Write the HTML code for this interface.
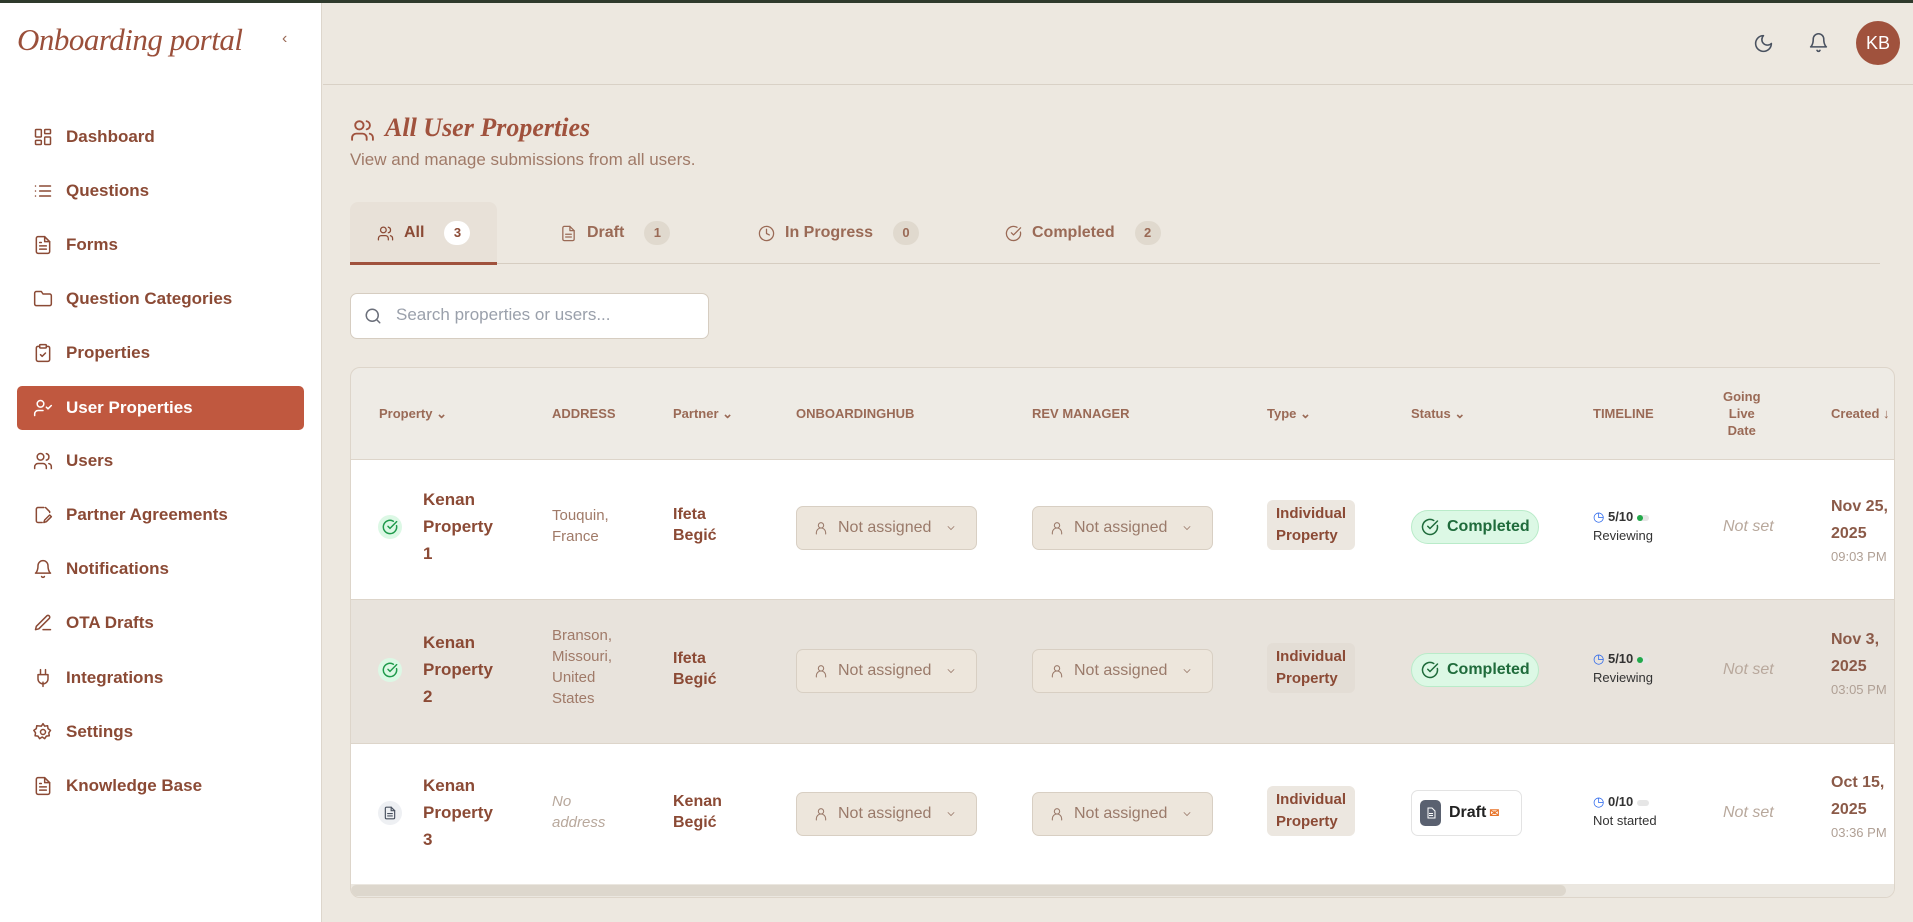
<!DOCTYPE html>
<html><head><meta charset="utf-8"><style>
*{margin:0;padding:0;box-sizing:border-box}
body{width:1913px;height:922px;overflow:hidden;background:#ede8e0;font-family:"Liberation Sans",sans-serif;position:relative;color:#8b4a35}
.abs{position:absolute}
.topbar{left:0;top:0;width:1913px;height:3px;background:#2f3a2c}
.side{left:0;top:3px;width:322px;height:919px;background:#fff;border-right:1px solid #ddd6cc}
.logo{left:17px;top:22px;font-family:"Liberation Serif",serif;font-style:italic;font-size:31px;color:#9a4f3a;letter-spacing:-0.5px}
.nav{left:17px;width:287px;height:44px;display:flex;align-items:center;padding-left:16px;font-size:17px;font-weight:bold;color:#8b4a35;border-radius:5px}
.nav svg{width:20px;height:20px;margin-right:13px;fill:none;stroke:#8b4a35;stroke-width:1.8;stroke-linecap:round;stroke-linejoin:round}
.nav.act{background:#c0583f;color:#fff}
.nav.act svg{stroke:#fff}
.hdr{left:323px;top:3px;right:0;height:82px;border-bottom:1px solid #d9d1c6}
.ic{fill:none;stroke:#4a5260;stroke-width:1.8;stroke-linecap:round;stroke-linejoin:round}
.tab{top:202px;height:62px;display:flex;align-items:center;font-size:16px;color:#9a6a56;font-weight:bold}
.tab svg{width:17px;height:17px;margin-right:10px;fill:none;stroke:#9a6a56;stroke-width:1.8;stroke-linecap:round;stroke-linejoin:round}
.bdg{display:inline-block;width:26px;height:24px;border-radius:12px;background:#e0d9ce;font-size:13px;text-align:center;line-height:24px;margin-left:20px;color:#9a6a56}
.th{top:400px;font-size:13px;font-weight:bold;color:#9a6a56}
.card{left:350px;top:367px;width:1545px;height:531px;border:1px solid #ddd5ca;border-radius:10px;background:#eeebe5;overflow:hidden}
.row{left:0;width:1545px;border-top:1px solid #ddd5ca}
.cell{position:absolute;font-size:16px}
.name{font-weight:bold;font-size:17px;line-height:27px;color:#8b4a35}
.addr{color:#a07a68;line-height:21px;font-size:15px}
.dd{position:absolute;width:181px;height:44px;background:#ede6dc;border:1px solid #d8cfc3;border-radius:7px;display:flex;align-items:center;padding-left:16px;font-size:16px;color:#9a7a6a}
.dd svg{fill:none;stroke:#9a7a6a;stroke-width:1.6;stroke-linecap:round}
.type{position:absolute;background:#ece7e0;border-radius:6px;padding:3px 9px;font-size:15px;line-height:22px;color:#8b4a35;font-weight:bold}
.comp{position:absolute;width:128px;height:34px;border-radius:17px;background:#dcf8e5;border:1px solid #b9ebc9;display:flex;align-items:center;padding-left:9px;font-size:16px;font-weight:bold;color:#1f6b3b}
.tl{position:absolute;font-size:13px;color:#333}
.ns{position:absolute;font-style:italic;color:#b8a89c;font-size:16px}
.dt{position:absolute;font-size:16px;font-weight:bold;color:#8b5a48;line-height:27px}
.dt small{display:block;font-weight:normal;color:#b0a095;font-size:13px;line-height:20px}
.sic{position:absolute;width:24px;height:24px;border-radius:12px;display:flex;align-items:center;justify-content:center}
</style></head><body>
<div class="abs topbar"></div>
<div class="abs side"></div>
<div class="abs logo">Onboarding portal</div>
<div class="abs" style="left:282px;top:30px;font-size:16px;color:#9a6a56">‹</div>

<div class="abs nav" style="top:115px"><svg viewBox="0 0 24 24"><rect x="3" y="3" width="7" height="9" rx="1"/><rect x="14" y="3" width="7" height="5" rx="1"/><rect x="14" y="12" width="7" height="9" rx="1"/><rect x="3" y="16" width="7" height="5" rx="1"/></svg>Dashboard</div>
<div class="abs nav" style="top:169px"><svg viewBox="0 0 24 24"><path d="M8 6h13M8 12h13M8 18h13M3 6h.01M3 12h.01M3 18h.01"/></svg>Questions</div>
<div class="abs nav" style="top:223px"><svg viewBox="0 0 24 24"><path d="M14 2H6a2 2 0 0 0-2 2v16a2 2 0 0 0 2 2h12a2 2 0 0 0 2-2V8z"/><path d="M14 2v6h6M8 13h8M8 17h8M8 9h2"/></svg>Forms</div>
<div class="abs nav" style="top:277px"><svg viewBox="0 0 24 24"><path d="M20 20a2 2 0 0 0 2-2V8a2 2 0 0 0-2-2h-8l-2-3H4a2 2 0 0 0-2 2v13a2 2 0 0 0 2 2z"/></svg>Question Categories</div>
<div class="abs nav" style="top:331px"><svg viewBox="0 0 24 24"><rect x="8" y="2" width="8" height="4" rx="1"/><path d="M16 4h2a2 2 0 0 1 2 2v14a2 2 0 0 1-2 2H6a2 2 0 0 1-2-2V6a2 2 0 0 1 2-2h2M9 14l2 2 4-4"/></svg>Properties</div>
<div class="abs nav act" style="top:386px"><svg viewBox="0 0 24 24"><circle cx="9" cy="7" r="4"/><path d="M2 21v-2a4 4 0 0 1 4-4h6M16 11l2 2 4-4"/></svg>User Properties</div>
<div class="abs nav" style="top:439px"><svg viewBox="0 0 24 24"><circle cx="9" cy="7" r="4"/><path d="M16 21v-2a4 4 0 0 0-4-4H6a4 4 0 0 0-4 4v2M16 3.1a4 4 0 0 1 0 7.8M22 21v-2a4 4 0 0 0-3-3.9"/></svg>Users</div>
<div class="abs nav" style="top:493px"><svg viewBox="0 0 24 24"><path d="M13 3H6a2 2 0 0 0-2 2v14a2 2 0 0 0 2 2h5M20 9V8l-5-5M13 21l1-3 6-6 2 2-6 6z"/></svg>Partner Agreements</div>
<div class="abs nav" style="top:547px"><svg viewBox="0 0 24 24"><path d="M6 8a6 6 0 0 1 12 0c0 7 3 9 3 9H3s3-2 3-9M10.3 21a1.9 1.9 0 0 0 3.4 0"/></svg>Notifications</div>
<div class="abs nav" style="top:601px"><svg viewBox="0 0 24 24"><path d="M12 20h9M16.5 3.5a2.1 2.1 0 0 1 3 3L7 19l-4 1 1-4z"/></svg>OTA Drafts</div>
<div class="abs nav" style="top:656px"><svg viewBox="0 0 24 24"><path d="M12 22v-5M9 8V2M15 8V2M18 8v5a6 6 0 0 1-12 0V8z"/></svg>Integrations</div>
<div class="abs nav" style="top:710px"><svg viewBox="0 0 24 24"><circle cx="12" cy="12" r="3"/><path d="M12 2l2 3 3.5-.5.5 3.5 3 2-2 3 .5 3.5-3.5.5-2 3-3-2-3 2-2-3-3.5-.5.5-3.5-2-3 3-2 .5-3.5L10 5z"/></svg>Settings</div>
<div class="abs nav" style="top:764px"><svg viewBox="0 0 24 24"><path d="M14 2H6a2 2 0 0 0-2 2v16a2 2 0 0 0 2 2h12a2 2 0 0 0 2-2V8z"/><path d="M14 2v6h6M8 13h8M8 17h8M8 9h2"/></svg>Knowledge Base</div>

<div class="abs hdr"></div>
<svg class="abs ic" style="left:1753px;top:33px" width="21" height="21" viewBox="0 0 24 24"><path d="M12 3a6 6 0 0 0 9 9 9 9 0 1 1-9-9z"/></svg>
<svg class="abs ic" style="left:1808px;top:32px" width="21" height="21" viewBox="0 0 24 24"><path d="M6 8a6 6 0 0 1 12 0c0 7 3 9 3 9H3s3-2 3-9M10.3 21a1.9 1.9 0 0 0 3.4 0"/></svg>
<div class="abs" style="left:1856px;top:21px;width:44px;height:44px;border-radius:22px;background:#a0523d;color:#fff;font-size:18px;text-align:center;line-height:44px">KB</div>

<svg class="abs" style="left:350px;top:118px" width="25" height="25" viewBox="0 0 24 24" fill="none" stroke="#a0523d" stroke-width="1.8" stroke-linecap="round"><circle cx="9" cy="7" r="4"/><path d="M16 21v-2a4 4 0 0 0-4-4H6a4 4 0 0 0-4 4v2M16 3.1a4 4 0 0 1 0 7.8M22 21v-2a4 4 0 0 0-3-3.9"/></svg>
<div class="abs" style="left:385px;top:113px;font-family:'Liberation Serif',serif;font-style:italic;font-weight:bold;font-size:26px;color:#a0523d">All User Properties</div>
<div class="abs" style="left:350px;top:150px;font-size:17px;color:#a07a68">View and manage submissions from all users.</div>

<div class="abs" style="left:350px;top:202px;width:147px;height:62px;background:#e8e1d8;border-radius:8px 8px 0 0"></div>
<div class="abs" style="left:350px;top:263px;width:1530px;height:1px;background:#d6cdc1"></div>
<div class="abs" style="left:350px;top:262px;width:147px;height:3px;background:#a0523d"></div>
<div class="abs tab" style="left:377px;color:#8b4a35"><svg viewBox="0 0 24 24" style="stroke:#8b4a35"><circle cx="9" cy="7" r="4"/><path d="M16 21v-2a4 4 0 0 0-4-4H6a4 4 0 0 0-4 4v2M16 3.1a4 4 0 0 1 0 7.8M22 21v-2a4 4 0 0 0-3-3.9"/></svg>All<span class="bdg" style="background:#fff;color:#8b4a35">3</span></div>
<div class="abs tab" style="left:560px"><svg viewBox="0 0 24 24"><path d="M14 2H6a2 2 0 0 0-2 2v16a2 2 0 0 0 2 2h12a2 2 0 0 0 2-2V8z"/><path d="M14 2v6h6M8 13h8M8 17h8"/></svg>Draft<span class="bdg">1</span></div>
<div class="abs tab" style="left:758px"><svg viewBox="0 0 24 24"><circle cx="12" cy="12" r="10"/><path d="M12 6v6l4 2"/></svg>In Progress<span class="bdg">0</span></div>
<div class="abs tab" style="left:1005px"><svg viewBox="0 0 24 24"><path d="M21.8 10A10 10 0 1 1 17 3.3"/><path d="M9 11l3 3L22 4"/></svg>Completed<span class="bdg">2</span></div>

<div class="abs" style="left:350px;top:293px;width:359px;height:46px;background:#fff;border:1px solid #d6cdc1;border-radius:7px"></div>
<svg class="abs" style="left:364px;top:307px" width="18" height="18" viewBox="0 0 24 24" fill="none" stroke="#6b6f7a" stroke-width="2" stroke-linecap="round"><circle cx="11" cy="11" r="8"/><path d="M21 21l-4.3-4.3"/></svg>
<div class="abs" style="left:396px;top:305px;font-size:17px;color:#9aa0ab">Search properties or users...</div>

<div class="abs card">
 <div class="abs th" style="left:28px;top:38px">Property ⌄</div>
 <div class="abs th" style="left:201px;top:38px">ADDRESS</div>
 <div class="abs th" style="left:322px;top:38px">Partner ⌄</div>
 <div class="abs th" style="left:445px;top:38px">ONBOARDINGHUB</div>
 <div class="abs th" style="left:681px;top:38px">REV MANAGER</div>
 <div class="abs th" style="left:916px;top:38px">Type ⌄</div>
 <div class="abs th" style="left:1060px;top:38px">Status ⌄</div>
 <div class="abs th" style="left:1242px;top:38px">TIMELINE</div>
 <div class="abs th" style="left:1372px;top:20px;text-align:center;line-height:17px">Going<br>Live<br>Date</div>
 <div class="abs th" style="left:1480px;top:38px">Created ↓</div>

 <div class="abs row" style="top:91px;height:140px;background:#fff"></div>
 <div class="abs row" style="top:231px;height:144px;background:#e8e3dc"></div>
 <div class="abs row" style="top:375px;height:141px;background:#fff"></div>
 <div class="abs" style="left:0;top:516px;width:1545px;height:15px;background:#ebe7e0"></div>
 <div class="abs" style="left:0;top:517px;width:1215px;height:11px;background:#ddd7cd;border-radius:6px"></div>

 <div class="sic" style="left:27px;top:147px;background:#dcf8e5"><svg width="16" height="16" viewBox="0 0 24 24" fill="none" stroke="#1e9a4b" stroke-width="2.2" stroke-linecap="round"><path d="M21.8 10A10 10 0 1 1 17 3.3"/><path d="M9 11l3 3L22 4"/></svg></div>
 <div class="cell name" style="left:72px;top:118px">Kenan<br>Property<br>1</div>
 <div class="cell addr" style="left:201px;top:137px">Touquin,<br>France</div>
 <div class="cell name" style="left:322px;top:136px;line-height:21px;font-size:16px">Ifeta<br>Begić</div>
 <div class="dd" style="left:445px;top:138px"><svg width="16" height="16" viewBox="0 0 24 24"><circle cx="12" cy="8" r="4"/><path d="M5 21v-2a5 5 0 0 1 14 0v2"/></svg><span style="margin:0 14px 0 9px">Not assigned</span><svg width="12" height="12" viewBox="0 0 24 24"><path d="M6 9l6 6 6-6"/></svg></div>
 <div class="dd" style="left:681px;top:138px"><svg width="16" height="16" viewBox="0 0 24 24"><circle cx="12" cy="8" r="4"/><path d="M5 21v-2a5 5 0 0 1 14 0v2"/></svg><span style="margin:0 14px 0 9px">Not assigned</span><svg width="12" height="12" viewBox="0 0 24 24"><path d="M6 9l6 6 6-6"/></svg></div>
 <div class="type" style="left:916px;top:132px">Individual<br>Property</div>
 <div class="comp" style="left:1060px;top:142px"><svg width="18" height="18" viewBox="0 0 24 24" fill="none" stroke="#1f6b3b" stroke-width="2" stroke-linecap="round"><path d="M21.8 10A10 10 0 1 1 17 3.3"/><path d="M9 11l3 3L22 4"/></svg><span style="margin-left:8px">Completed</span></div>
 <div class="tl" style="left:1242px;top:141px"><span style="color:#2563eb">◷</span> <b>5/10</b> <span style="display:inline-block;width:12px;height:6px;border-radius:3px;background:#e6e6e6;vertical-align:middle;position:relative"><span style="position:absolute;left:0;width:6px;height:6px;border-radius:3px;background:#22a94a"></span></span><br><span style="line-height:22px">Reviewing</span></div>
 <div class="ns" style="left:1372px;top:150px">Not set</div>
 <div class="dt" style="left:1480px;top:125px">Nov 25,<br>2025<small>09:03 PM</small></div>

 <div class="sic" style="left:27px;top:290px;background:#dcf8e5"><svg width="16" height="16" viewBox="0 0 24 24" fill="none" stroke="#1e9a4b" stroke-width="2.2" stroke-linecap="round"><path d="M21.8 10A10 10 0 1 1 17 3.3"/><path d="M9 11l3 3L22 4"/></svg></div>
 <div class="cell name" style="left:72px;top:261px">Kenan<br>Property<br>2</div>
 <div class="cell addr" style="left:201px;top:257px">Branson,<br>Missouri,<br>United<br>States</div>
 <div class="cell name" style="left:322px;top:280px;line-height:21px;font-size:16px">Ifeta<br>Begić</div>
 <div class="dd" style="left:445px;top:281px"><svg width="16" height="16" viewBox="0 0 24 24"><circle cx="12" cy="8" r="4"/><path d="M5 21v-2a5 5 0 0 1 14 0v2"/></svg><span style="margin:0 14px 0 9px">Not assigned</span><svg width="12" height="12" viewBox="0 0 24 24"><path d="M6 9l6 6 6-6"/></svg></div>
 <div class="dd" style="left:681px;top:281px"><svg width="16" height="16" viewBox="0 0 24 24"><circle cx="12" cy="8" r="4"/><path d="M5 21v-2a5 5 0 0 1 14 0v2"/></svg><span style="margin:0 14px 0 9px">Not assigned</span><svg width="12" height="12" viewBox="0 0 24 24"><path d="M6 9l6 6 6-6"/></svg></div>
 <div class="type" style="left:916px;top:275px;background:#e3ddd5">Individual<br>Property</div>
 <div class="comp" style="left:1060px;top:285px"><svg width="18" height="18" viewBox="0 0 24 24" fill="none" stroke="#1f6b3b" stroke-width="2" stroke-linecap="round"><path d="M21.8 10A10 10 0 1 1 17 3.3"/><path d="M9 11l3 3L22 4"/></svg><span style="margin-left:8px">Completed</span></div>
 <div class="tl" style="left:1242px;top:283px"><span style="color:#2563eb">◷</span> <b>5/10</b> <span style="display:inline-block;width:12px;height:6px;border-radius:3px;background:#e6e6e6;vertical-align:middle;position:relative"><span style="position:absolute;left:0;width:6px;height:6px;border-radius:3px;background:#22a94a"></span></span><br><span style="line-height:22px">Reviewing</span></div>
 <div class="ns" style="left:1372px;top:293px">Not set</div>
 <div class="dt" style="left:1480px;top:258px">Nov 3,<br>2025<small>03:05 PM</small></div>

 <div class="sic" style="left:27px;top:433px;background:#eef0f3"><svg width="14" height="14" viewBox="0 0 24 24" fill="none" stroke="#4a5260" stroke-width="2" stroke-linecap="round"><path d="M14 2H6a2 2 0 0 0-2 2v16a2 2 0 0 0 2 2h12a2 2 0 0 0 2-2V8z"/><path d="M14 2v6h6M8 13h8M8 17h8"/></svg></div>
 <div class="cell name" style="left:72px;top:404px">Kenan<br>Property<br>3</div>
 <div class="cell addr" style="left:201px;top:423px;font-style:italic;color:#b8a89c">No<br>address</div>
 <div class="cell name" style="left:322px;top:423px;line-height:21px;font-size:16px">Kenan<br>Begić</div>
 <div class="dd" style="left:445px;top:424px"><svg width="16" height="16" viewBox="0 0 24 24"><circle cx="12" cy="8" r="4"/><path d="M5 21v-2a5 5 0 0 1 14 0v2"/></svg><span style="margin:0 14px 0 9px">Not assigned</span><svg width="12" height="12" viewBox="0 0 24 24"><path d="M6 9l6 6 6-6"/></svg></div>
 <div class="dd" style="left:681px;top:424px"><svg width="16" height="16" viewBox="0 0 24 24"><circle cx="12" cy="8" r="4"/><path d="M5 21v-2a5 5 0 0 1 14 0v2"/></svg><span style="margin:0 14px 0 9px">Not assigned</span><svg width="12" height="12" viewBox="0 0 24 24"><path d="M6 9l6 6 6-6"/></svg></div>
 <div class="type" style="left:916px;top:418px">Individual<br>Property</div>
 <div class="abs" style="left:1060px;top:422px;width:111px;height:46px;background:#fff;border:1px solid #e3e3e3;border-radius:7px;display:flex;align-items:center;padding-left:8px;font-size:16px;font-weight:bold;color:#222"><span style="width:21px;height:26px;background:#5a6170;border-radius:5px;display:inline-flex;align-items:center;justify-content:center"><svg width="12" height="12" viewBox="0 0 24 24" fill="none" stroke="#fff" stroke-width="2"><path d="M14 2H6v20h14V8zM8 13h8M8 17h8"/></svg></span><span style="margin-left:8px">Draft</span><span style="color:#e8762c;font-size:12px;margin-left:3px">✉</span></div>
 <div class="tl" style="left:1242px;top:426px"><span style="color:#2563eb">◷</span> <b>0/10</b> <span style="display:inline-block;width:12px;height:6px;border-radius:3px;background:#e6e6e6;vertical-align:middle"></span><br><span style="line-height:22px">Not started</span></div>
 <div class="ns" style="left:1372px;top:436px">Not set</div>
 <div class="dt" style="left:1480px;top:401px">Oct 15,<br>2025<small>03:36 PM</small></div>
</div>
</body></html>
